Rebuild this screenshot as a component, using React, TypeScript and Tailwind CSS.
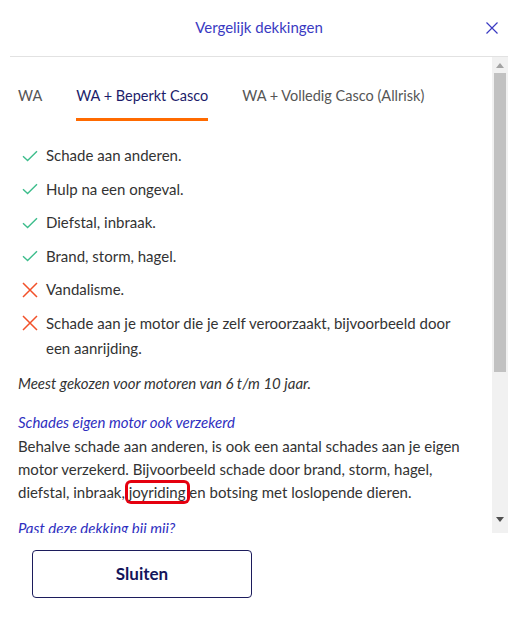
import React from 'react';

const font = { fontFamily: 'Lato, "Open Sans", sans-serif' };

function Check() {
  return (
    <svg width="16" height="12" viewBox="0 0 16 12" className="shrink-0">
      <path d="M1 6.2 L5.6 10.6 L15 1.2" fill="none" stroke="#3dbd8c" strokeWidth="1.4" />
    </svg>
  );
}

function Cross() {
  return (
    <svg width="16" height="16" viewBox="0 0 16 16" className="shrink-0">
      <path d="M1 1 L15 15 M15 1 L1 15" fill="none" stroke="#f2512a" strokeWidth="1.5" />
    </svg>
  );
}

const items: { ok: boolean; text: string }[] = [
  { ok: true, text: 'Schade aan anderen.' },
  { ok: true, text: 'Hulp na een ongeval.' },
  { ok: true, text: 'Diefstal, inbraak.' },
  { ok: true, text: 'Brand, storm, hagel.' },
  { ok: false, text: 'Vandalisme.' },
  { ok: false, text: 'Schade aan je motor die je zelf veroorzaakt, bijvoorbeeld door een aanrijding.' },
];

export default function App() {
  return (
    <div className="w-[532px] h-[629px] bg-white text-[#333] overflow-hidden" style={font}>
      <div className="mx-[10px] w-[498px]">
        {/* header */}
        <div className="h-[57px] border-b border-[#e2e2e2] flex items-center justify-center relative">
          <h1 className="text-[15px] text-[#3a3ac2] -mt-[2px]">Vergelijk dekkingen</h1>
          <button className="absolute right-[10px] top-[22px]">
            <svg width="12" height="12" viewBox="0 0 12 12">
              <path d="M0.5 0.5 L11.5 11.5 M11.5 0.5 L0.5 11.5" stroke="#3a3ac2" strokeWidth="1.2" fill="none" />
            </svg>
          </button>
        </div>

        {/* scroll area */}
        <div className="flex h-[476px]">
          <div className="flex-1 overflow-hidden pl-[8px] pr-[10px]">
            <div className="flex gap-[34px] pt-[28px] text-[14.5px] leading-[22px]">
              <span className="text-[#555] pb-[11px]">WA</span>
              <span className="text-[#1c1c6b] pb-[11px] border-b-[3px] border-[#ff6a00]">WA + Beperkt Casco</span>
              <span className="text-[#555] pb-[11px]">WA + Volledig Casco (Allrisk)</span>
            </div>

            <ul className="mt-[22px] flex flex-col gap-[8.6px] text-[15px] leading-[25px] pr-[14px]">
              {items.map((it) => (
                <li key={it.text} className="flex gap-[8px]">
                  <span className="w-[20px] h-[25px] flex items-center justify-center pl-[4px]">
                    {it.ok ? <Check /> : <Cross />}
                  </span>
                  <span className="flex-1">{it.text}</span>
                </li>
              ))}
            </ul>

            <p className="mt-[10px] italic text-[15px] leading-[25px]">Meest gekozen voor motoren van 6 t/m 10 jaar.</p>

            <p className="mt-[15px] italic text-[15px] leading-[23px] text-[#2f2fbf]">Schades eigen motor ook verzekerd</p>
            <p className="mt-[1px] text-[15px] leading-[23px]">
              Behalve schade aan anderen, is ook een aantal schades aan je eigen motor verzekerd. Bijvoorbeeld schade door brand,
              storm, hagel, diefstal, inbraak,{' '}
              <span className="rounded-[3px] ring-[3px] ring-[#e5000f] px-[1px] -mx-[1px]">joyriding</span> en botsing met loslopende dieren.
            </p>

            <p className="mt-[13px] italic text-[15px] leading-[23px] text-[#2f2fbf]">Past deze dekking bij mij?</p>
          </div>

          {/* scrollbar */}
          <div className="w-[16px] bg-[#f1f1f1] flex flex-col items-center">
            <div className="h-[16px] flex items-center justify-center">
              <svg width="8" height="5" viewBox="0 0 8 5"><path d="M0 5 L4 0 L8 5 Z" fill="#a3a3a3" /></svg>
            </div>
            <div className="w-[12px] h-[299px] bg-[#c1c1c1]" />
            <div className="flex-1" />
            <div className="h-[22px] flex items-start justify-center pt-[6px]">
              <svg width="8" height="5" viewBox="0 0 8 5"><path d="M0 0 L4 5 L8 0 Z" fill="#505050" /></svg>
            </div>
          </div>
        </div>

        {/* footer */}
        <div className="pt-[17px] pl-[22px]">
          <button className="w-[220px] h-[48px] border border-[#1c1c5c] rounded-[4px] text-[17px] font-bold text-[#14145a]">
            Sluiten
          </button>
        </div>
      </div>
    </div>
  );
}
